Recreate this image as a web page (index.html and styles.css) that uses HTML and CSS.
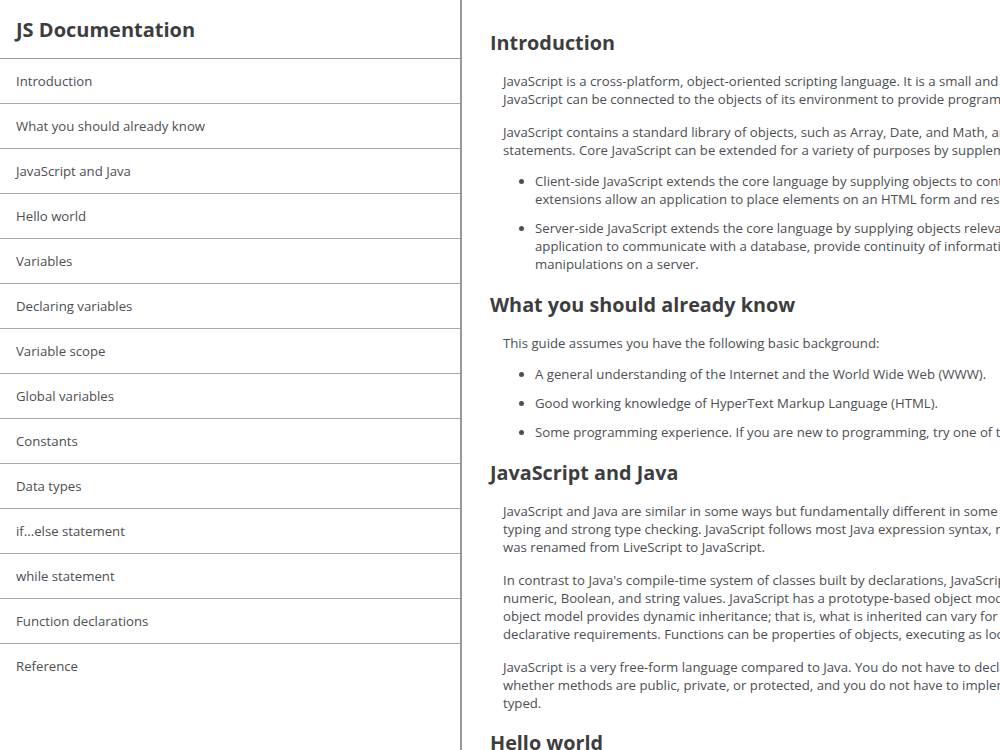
FILE: index.html
```html
<!DOCTYPE html>
<html>
<head>
  <title>JS Documentation</title>
  <link rel="stylesheet" href="styles.css">
</head>
<body>
  <nav id="navbar">
    <header>JS Documentation</header>
    <a class="nav-link" href="#Introduction">Introduction</a>
    <a class="nav-link" href="#What_you_should_already_know">What you should already know</a>
    <a class="nav-link" href="#JavaScript_and_Java">JavaScript and Java</a>
    <a class="nav-link" href="#Hello_world">Hello world</a>
    <a class="nav-link" href="#Variables">Variables</a>
    <a class="nav-link" href="#Declaring_variables">Declaring variables</a>
    <a class="nav-link" href="#Variable_scope">Variable scope</a>
    <a class="nav-link" href="#Global_variables">Global variables</a>
    <a class="nav-link" href="#Constants">Constants</a>
    <a class="nav-link" href="#Data_types">Data types</a>
    <a class="nav-link" href="#if...else_statement">if...else statement</a>
    <a class="nav-link" href="#while_statement">while statement</a>
    <a class="nav-link" href="#Function_declarations">Function declarations</a>
    <a class="nav-link" href="#Reference">Reference</a>
  </nav>

  <main id="main-doc">
    <section class="main-section" id="Introduction">
      <header>Introduction</header>
      <article>
        <p>JavaScript is a cross-platform, object-oriented scripting language. It is a small and lightweight language. Inside a host environment (for example, a web browser), JavaScript can be connected to the objects of its environment to provide programmatic control over them.</p>
        <p>JavaScript contains a standard library of objects, such as Array, Date, and Math, and a core set of language elements such as operators, control structures, and statements. Core JavaScript can be extended for a variety of purposes by supplementing it with additional objects; for example:</p>
        <ul>
          <li>Client-side JavaScript extends the core language by supplying objects to control a browser and its Document Object Model (DOM). For example, client-side extensions allow an application to place elements on an HTML form and respond to user events such as mouse clicks, form input, and page navigation.</li>
          <li>Server-side JavaScript extends the core language by supplying objects relevant to running JavaScript on a server. For example, server-side extensions allow an application to communicate with a database, provide continuity of information from one invocation to another of the application, or perform file manipulations on a server.</li>
        </ul>
      </article>
    </section>

    <section class="main-section" id="What_you_should_already_know">
      <header>What you should already know</header>
      <article>
        <p>This guide assumes you have the following basic background:</p>
        <ul>
          <li>A general understanding of the Internet and the World Wide Web (WWW).</li>
          <li>Good working knowledge of HyperText Markup Language (HTML).</li>
          <li>Some programming experience. If you are new to programming, try one of the tutorials linked on the main page about JavaScript.</li>
        </ul>
      </article>
    </section>

    <section class="main-section" id="JavaScript_and_Java">
      <header>JavaScript and Java</header>
      <article>
        <p>JavaScript and Java are similar in some ways but fundamentally different in some others. The JavaScript language resembles Java but does not have Java's static typing and strong type checking. JavaScript follows most Java expression syntax, naming conventions and basic control-flow constructs which was the reason why it was renamed from LiveScript to JavaScript.</p>
        <p>In contrast to Java's compile-time system of classes built by declarations, JavaScript supports a runtime system based on a small number of data types representing numeric, Boolean, and string values. JavaScript has a prototype-based object model instead of the more common class-based object model. The prototype-based object model provides dynamic inheritance; that is, what is inherited can vary for individual objects. JavaScript also supports functions without any special declarative requirements. Functions can be properties of objects, executing as loosely typed methods.</p>
        <p>JavaScript is a very free-form language compared to Java. You do not have to declare all variables, classes, and methods. You do not have to be concerned with whether methods are public, private, or protected, and you do not have to implement interfaces. Variables, parameters, and function return types are not explicitly typed.</p>
      </article>
    </section>

    <section class="main-section" id="Hello_world">
      <header>Hello world</header>
      <article>
        <p>To get started with writing JavaScript, open the Scratchpad and write your first "Hello world" JavaScript code:</p>
      </article>
    </section>
  </main>
</body>
</html>
```

FILE: styles.css
```css
html, body {
  margin: 0;
  padding: 0;
}

body {
  display: flex;
  font-family: "Open Sans", "Noto Sans", sans-serif;
  color: #4d4e53;
  background-color: white;
  overflow: hidden;
  height: 100vh;
}

#navbar {
  flex: 0 0 460px;
  display: flex;
  flex-direction: column;
  border-right: 2px solid #999;
  height: 100vh;
}

#navbar header {
  height: 58px;
  line-height: 60px;
  padding-left: 16px;
  font-size: 20px;
  font-weight: bold;
  color: #3d3d40;
  border-bottom: 1px solid #999;
}

.nav-link {
  display: block;
  height: 44px;
  line-height: 44px;
  padding-left: 16px;
  font-size: 13.2px;
  color: #4d4e53;
  text-decoration: none;
  border-bottom: 1px solid #aaa;
}

.nav-link:last-child {
  border-bottom: none;
}

#main-doc {
  flex: 0 0 auto;
  padding: 29px 0 0 28px;
}

.main-section {
  padding-bottom: 2px;
}

.main-section header {
  font-size: 19.8px;
  line-height: 27px;
  font-weight: bold;
  color: #3d3d40;
  margin-bottom: 16px;
}

.main-section article {
  width: 1005px;
  margin-left: 13px;
  font-size: 13.2px;
  line-height: 18px;
}

.main-section p {
  margin: 0 0 15px;
}

.main-section ul {
  margin: -2px 0 16px;
  padding-left: 32px;
}

.main-section li {
  margin-bottom: 11px;
}
```
